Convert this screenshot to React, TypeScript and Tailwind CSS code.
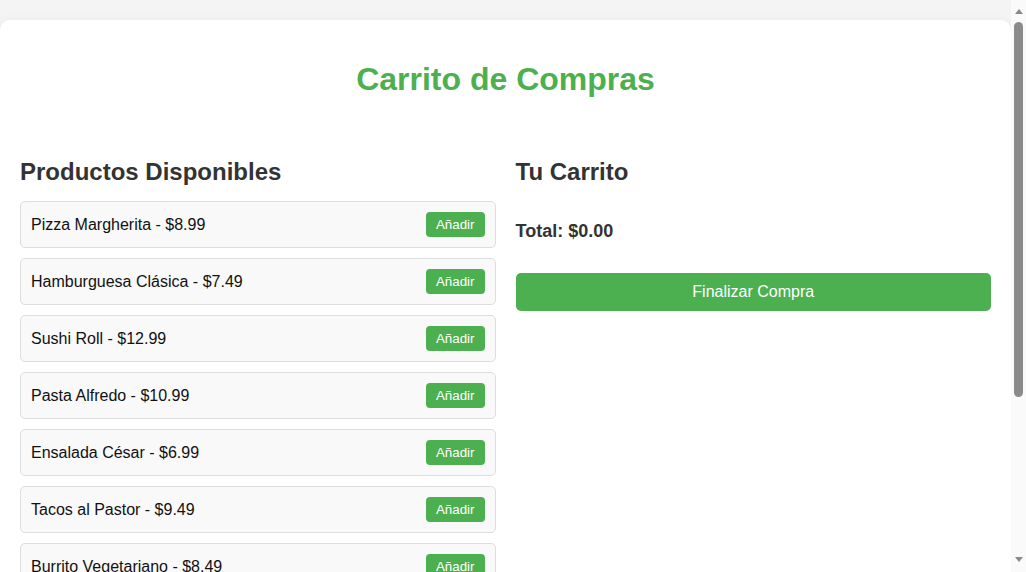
const products = [
  { name: 'Pizza Margherita', price: 8.99 },
  { name: 'Hamburguesa Clásica', price: 7.49 },
  { name: 'Sushi Roll', price: 12.99 },
  { name: 'Pasta Alfredo', price: 10.99 },
  { name: 'Ensalada César', price: 6.99 },
  { name: 'Tacos al Pastor', price: 9.49 },
  { name: 'Burrito Vegetariano', price: 8.49 },
  { name: 'Pollo al Curry', price: 11.49 },
  { name: 'Sopa de Tomate', price: 5.99 },
  { name: 'Tarta de Queso', price: 4.99 },
];

function ScrollBar() {
  return (
    <div className="flex w-[15px] shrink-0 flex-col items-center bg-[#fafafa] pt-[9px] pb-[10px]">
      <div className="h-0 w-0 border-x-[4px] border-b-[5px] border-x-transparent border-b-[#8a8a8a]" />
      <div className="mt-[8px] h-[375px] w-[9px] rounded-full bg-[#8a8a8a]" />
      <div className="flex-1" />
      <div className="h-0 w-0 border-x-[4px] border-t-[5px] border-x-transparent border-t-[#8a8a8a]" />
    </div>
  );
}

export default function App() {
  return (
    <div className="flex h-screen bg-[#f4f4f4] font-['Liberation_Sans',Arial,sans-serif] text-[#333]">
      <div className="min-w-0 flex-1 overflow-hidden py-5">
        <div className="rounded-[10px] bg-white p-5 shadow-[0_0_10px_rgba(0,0,0,0.05)]">
          <h1 className="mt-[21px] mb-[61px] text-center text-[32px] font-bold leading-[36px] text-[#4CAF50]">
            Carrito de Compras
          </h1>
          <div className="flex gap-5">
            <div className="flex-1">
              <h2 className="mb-4 text-2xl leading-[27px] font-bold">Productos Disponibles</h2>
              <ul>
                {products.map((p) => (
                  <li
                    key={p.name}
                    className="mb-2.5 flex items-center justify-between rounded-[5px] border border-[#ddd] bg-[#f9f9f9] p-2.5 text-base"
                  >
                    <span className="text-[#111]">
                      {p.name} - ${p.price.toFixed(2)}
                    </span>
                    <button
                      type="button"
                      className="rounded-[4px] bg-[#4CAF50] px-2.5 py-[5px] text-[13.33px] leading-[15px] text-white"
                    >
                      Añadir
                    </button>
                  </li>
                ))}
              </ul>
            </div>
            <div className="flex-1">
              <h2 className="mb-9 text-2xl leading-[27px] font-bold">Tu Carrito</h2>
              <ul />
              <p className="mb-[31px] text-lg leading-[21px] font-bold">Total: $0.00</p>
              <button
                type="button"
                className="w-full rounded-[5px] bg-[#4CAF50] p-2.5 text-base leading-[18px] text-white"
              >
                Finalizar Compra
              </button>
            </div>
          </div>
        </div>
      </div>
      <ScrollBar />
    </div>
  );
}
